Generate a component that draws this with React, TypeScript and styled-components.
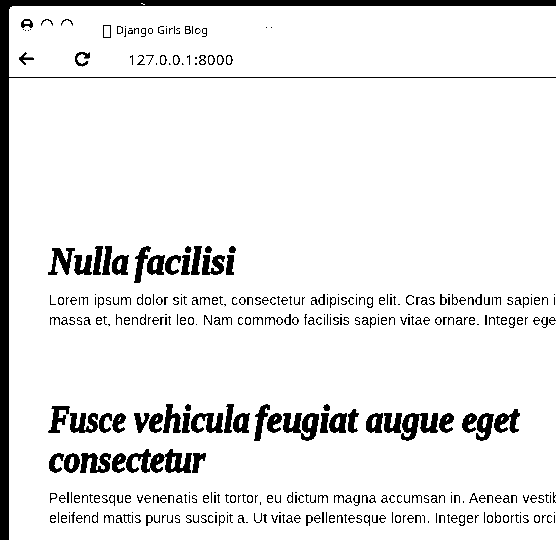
import React from "react";
import styled, { createGlobalStyle } from "styled-components";

const Global = createGlobalStyle`
  * { box-sizing: border-box; }
  body { margin: 0; background: #000; overflow: hidden; }
`;
const Desktop = styled.div`
  width: 556px; height: 540px; padding: 6px 0 0 9px; background: #000;
  overflow: hidden; position: relative; filter: grayscale(1) contrast(30);
`;
const Speck = styled.svg`position: absolute; left: 141px; top: 3px;`;
const Browser = styled.main`
  height: 534px; background: #fff; color: #000; border-top-left-radius: 5px; overflow: hidden;
`;
const TabBar = styled.header`
  height: 34px; display: flex; align-items: flex-start; padding: 12px 0 0 11px;
`;
const Lights = styled.svg`flex: none; width: 56px; height: 16px;`;
const Tab = styled.div`
  display: flex; align-items: center; margin: 5px 0 0 27px; width: 162px; gap: 5px; height: 14px;
`;
const Favicon = styled.span`width: 8px; height: 13px; border: 1px solid #000; margin-top: 2px;`;
const TabTitle = styled.span`
  font: 11px/14px "Noto Sans", sans-serif; letter-spacing: .13px; white-space: nowrap;
`;
const TabEdge = styled.svg`flex: none; margin-top: 9px;`;
const Toolbar = styled.nav`
  height: 38px; display: flex; align-items: center; padding: 1px 0 0 9px; border-bottom: 1px solid #000;
`;
const BackIcon = styled.svg`flex: none; width: 16px; height: 16px;`;
const ReloadIcon = styled.svg`flex: none; width: 16px; height: 16px; margin-left: 40px;`;
const Address = styled.span`
  font: 15px/20px "Noto Sans", sans-serif; letter-spacing: .27px; margin: -1px 0 0 38px;
`;
const Content = styled.section`padding: 164px 0 0 40px; width: 560px;`;
const Post = styled.article`margin-bottom: 70px;`;
const Title = styled.h1`
  margin: 0 0 9px; font: italic bold 38px/39px "Liberation Serif", serif;
  -webkit-text-stroke: 1.5px #000;
`;
const TitleLine = styled.span`display: flex; height: 39px; & + & { margin-top: 1px; }`;
const Word = styled.span<{ $width: number; $scale: number; $gap?: number }>`
  display: block; flex: none; width: ${p => p.$width}px; margin-right: ${p => p.$gap ?? 0}px;
  transform: scaleX(${p => p.$scale}); transform-origin: left; white-space: nowrap;
`;
const Body = styled.p`
  margin: 0; font: 14px/20px "Liberation Sans", sans-serif; white-space: nowrap;
`;
const Line = styled.span<{ $spacing: number }>`
  display: block; letter-spacing: ${p => p.$spacing}px;
`;

export default function App() {
  return (
    <>
      <Global />
      <Desktop>
        <Speck width="5" height="2" shapeRendering="crispEdges"><path d="M0 0h2v1H0zM2 1h2v1H2z" fill="#fff" /></Speck>
        <Browser>
          <TabBar>
            <Lights viewBox="0 0 56 16" fill="none" stroke="#000">
              <path d="M1.7 7.5a5.3 5.8 0 0 1 10.6 0" strokeWidth="1.8" />
              <path d="M1 5h3v1h6V5h3v4h-1v1h-2V9H4v1H2V9H1z" fill="#000" stroke="none" />
              <path d="M5 8.5h4" stroke="#fff" />
              <path d="M3 11h1v1H3zM5 12h1v1H5zM8 12h1v1H8zM10 11h1v1h-1z" fill="#000" stroke="none" />
              <path d="M21.5 7.5a5.5 5.8 0 0 1 11 0M41.5 7.5a5.5 5.8 0 0 1 11 0" strokeWidth="1.2" />
            </Lights>
            <Tab><Favicon /><TabTitle>Django Girls Blog</TabTitle></Tab>
            <TabEdge width="7" height="1"><path d="M1 0h1v1H1zM6 0h1v1H6z" fill="#000" /></TabEdge>
          </TabBar>
          <Toolbar>
            <BackIcon viewBox="0 0 16 16" fill="none" stroke="#000" strokeWidth="2.5"><path d="M8 1.8L2 7.8l6 6M2 7.8h13.8" /></BackIcon>
            <ReloadIcon viewBox="0 0 16 16" fill="none" stroke="#000" strokeWidth="2.7">
              <path d="M12.4 4A6 6 0 1 0 13.6 10" /><path d="M15.8 1v6.4H9z" fill="#000" stroke="none" />
            </ReloadIcon>
            <Address>127.0.0.1:8000</Address>
          </Toolbar>
          <Content>
            <Post>
              <Title>
                <TitleLine><Word $width={82} $gap={4} $scale={.9}>Nulla</Word><Word $width={103} $scale={.95}>facilisi</Word></TitleLine>
              </Title>
              <Body>
                <Line $spacing={.2}>Lorem ipsum dolor sit amet, consectetur adipiscing elit. Cras bibendum sapien in</Line>
                <Line $spacing={.15}>massa et, hendrerit leo. Nam commodo facilisis sapien vitae ornare. Integer eget</Line>
              </Body>
            </Post>
            <Post>
              <Title>
                <TitleLine>
                  <Word $width={78} $gap={7} $scale={.81}>Fusce</Word>
                  <Word $width={118} $gap={3} $scale={.87}>vehicula</Word>
                  <Word $width={105} $gap={6} $scale={.93}>feugiat</Word>
                  <Word $width={89} $gap={7} $scale={.91}>augue</Word>
                  <Word $width={57} $scale={.89}>eget</Word>
                </TitleLine>
                <TitleLine><Word $width={157} $scale={.87}>consectetur</Word></TitleLine>
              </Title>
              <Body>
                <Line $spacing={.2}>Pellentesque venenatis elit tortor, eu dictum magna accumsan in. Aenean vestib</Line>
                <Line $spacing={.14}>eleifend mattis purus suscipit a. Ut vitae pellentesque lorem. Integer lobortis orci</Line>
              </Body>
            </Post>
          </Content>
        </Browser>
      </Desktop>
    </>
  );
}
